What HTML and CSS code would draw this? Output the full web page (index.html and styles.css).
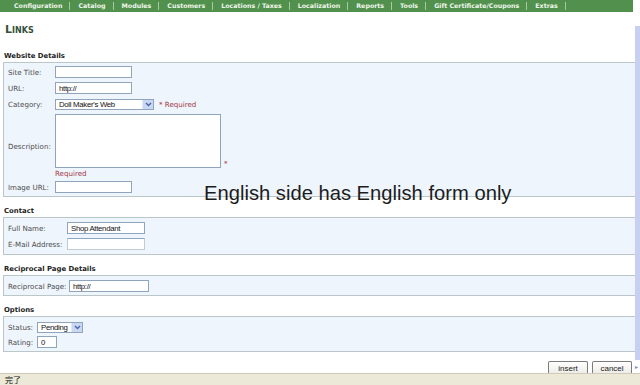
FILE: index.html
```html
<!DOCTYPE html>
<html>
<head>
<meta charset="utf-8">
<link rel="stylesheet" href="styles.css">
</head>
<body>
<div class="screen">
  <div class="viewport">
    <div class="page">
      <nav class="topnav">
        <span class="nav-item">Configuration</span>
        <span class="nav-item">Catalog</span>
        <span class="nav-item">Modules</span>
        <span class="nav-item">Customers</span>
        <span class="nav-item">Locations / Taxes</span>
        <span class="nav-item">Localization</span>
        <span class="nav-item">Reports</span>
        <span class="nav-item">Tools</span>
        <span class="nav-item">Gift Certificate/Coupons</span>
        <span class="nav-item">Extras</span>
      </nav>
      <h1 class="title">Links</h1>

      <h2 class="sec-title first">Website Details</h2>
      <div class="box box-website">
        <div class="row">
          <span class="label w47">Site Title:</span>
          <input class="field w77" type="text" value="">
        </div>
        <div class="row">
          <span class="label w47">URL:</span>
          <input class="field w77" type="text" value="http://">
        </div>
        <div class="row">
          <span class="label w47">Category:</span>
          <span class="select w99"><span class="sel-text">Doll Maker's Web</span><span class="sel-btn"><svg width="7" height="5" viewBox="0 0 7 5"><path d="M1 1 L3.5 3.5 L6 1" fill="none" stroke="#4a64a8" stroke-width="1.4"/></svg></span></span>
          <span class="req req-inline">* Required</span>
        </div>
        <div class="row row-desc">
          <span class="label w47">Description:</span>
          <div class="desc-col">
            <div class="desc-line">
              <textarea class="area"></textarea>
              <span class="req star">*</span>
            </div>
            <span class="req req-under">Required</span>
          </div>
        </div>
        <div class="row last">
          <span class="label w47">Image URL:</span>
          <input class="field w77" type="text" value="">
        </div>
      </div>

      <h2 class="sec-title">Contact</h2>
      <div class="box box-contact">
        <div class="row">
          <span class="label w59">Full Name:</span>
          <input class="field w78" type="text" value="Shop Attendant">
        </div>
        <div class="row last">
          <span class="label w59">E-Mail Address:</span>
          <input class="field w78 faint" type="text" value="">
        </div>
      </div>

      <h2 class="sec-title">Reciprocal Page Details</h2>
      <div class="box box-recip">
        <div class="row last">
          <span class="label w61">Reciprocal Page:</span>
          <input class="field w80" type="text" value="http://">
        </div>
      </div>

      <h2 class="sec-title">Options</h2>
      <div class="box box-options">
        <div class="row tight">
          <span class="label w29">Status:</span>
          <span class="select w46"><span class="sel-text">Pending</span><span class="sel-btn"><svg width="7" height="5" viewBox="0 0 7 5"><path d="M1 1 L3.5 3.5 L6 1" fill="none" stroke="#4a64a8" stroke-width="1.4"/></svg></span></span>
        </div>
        <div class="row last">
          <span class="label w29">Rating:</span>
          <input class="field w20" type="text" value="0">
        </div>
      </div>

      <div class="actions">
        <button class="btn">insert</button>
        <button class="btn">cancel</button>
      </div>
    </div>
    <div class="scrollbar">
      <span class="scroll-arrow">&#9656;</span>
    </div>
  </div>
  <div class="statusbar">完了</div>
  <div class="overlay">English side has English form only</div>
</div>
</body>
</html>
```

FILE: styles.css
```css
html, body {
  margin: 0;
  padding: 0;
  background: #ffffff;
}

.screen {
  position: relative;
  width: 640px;
  height: 385px;
  overflow: hidden;
  display: flex;
  flex-direction: column;
  font-family: "DejaVu Sans", Verdana, sans-serif;
}

.viewport {
  height: 373px;
  display: flex;
  flex-direction: row;
  overflow: hidden;
}

.page {
  width: 635px;
  flex: none;
}

.scrollbar {
  position: relative;
  width: 5px;
  margin-top: 26px;
  height: 334px;
  background: #c8d0f1;
}

.scroll-arrow {
  position: absolute;
  left: 0;
  top: 338px;
  font-size: 6px;
  line-height: 6px;
  color: #7d8ac0;
}

.topnav {
  height: 12px;
  width: 633px;
  background: #52904e;
  display: flex;
  align-items: center;
  padding-left: 6px;
  box-sizing: border-box;
}

.nav-item {
  font-family: "DejaVu Sans", Verdana, sans-serif;
  font-weight: bold;
  font-size: 6.3px;
  line-height: 8px;
  color: #eef6ea;
  padding: 0 7px 0 8px;
  border-right: 1px solid #a9cba4;
  white-space: nowrap;
}

.title {
  margin: 11px 0 0 5px;
  height: 13px;
  font-family: "DejaVu Sans", Verdana, sans-serif;
  font-size: 11px;
  line-height: 13px;
  font-weight: bold;
  font-variant: small-caps;
  color: #34503a;
}

.sec-title {
  margin: 9px 0 0 4px;
  height: 11px;
  font-family: "DejaVu Sans", Tahoma, sans-serif;
  font-size: 6.9px;
  line-height: 11px;
  font-weight: bold;
  color: #222222;
}

.sec-title.first {
  margin-top: 15px;
}

.box {
  margin-left: 3px;
  width: 628px;
  border: 1px solid #bac6c7;
  background: #eff5fc;
  padding: 3px 4px 3px 4px;
}

.box-contact {
  padding-top: 4px;
  padding-bottom: 4px;
}

.box-recip {
  padding-top: 4px;
  padding-bottom: 3px;
}

.box-options {
  padding-top: 4px;
  padding-bottom: 3px;
}

.row {
  display: flex;
  align-items: center;
  margin-bottom: 4px;
  height: 12px;
}

.row.tight {
  margin-bottom: 3px;
}

.row.last {
  margin-bottom: 0;
}

.label {
  font-family: "DejaVu Sans", Verdana, sans-serif;
  font-size: 7.1px;
  color: #4c4c4c;
  white-space: nowrap;
  flex: none;
}

.w47 { width: 47px; }
.w59 { width: 59px; }
.w61 { width: 61px; }
.w29 { width: 29px; }

.field {
  box-sizing: border-box;
  height: 12px;
  margin: 0;
  padding: 0 3px;
  border: 1px solid #8ea5bd;
  background: #ffffff;
  font-family: "Liberation Sans", Arial, sans-serif;
  font-size: 7.8px;
  letter-spacing: -0.3px;
  color: #111111;
  outline: none;
}

.field.faint {
  border-color: #c2ccd6;
  border-top-color: #8ea5bd;
}

.w77 { width: 77px; }
.w78 { width: 78px; }
.w80 { width: 80px; }
.w20 { width: 20px; }

.select {
  box-sizing: border-box;
  height: 11px;
  display: flex;
  align-items: center;
  border: 1px solid #8ea5bd;
  background: #ffffff;
  flex: none;
}

.w99 { width: 99px; }
.w46 { width: 46px; }

.sel-text {
  flex: 1;
  padding-left: 3px;
  font-family: "Liberation Sans", Arial, sans-serif;
  font-size: 7.8px;
  letter-spacing: -0.3px;
  color: #111111;
  line-height: 9px;
  white-space: nowrap;
}

.sel-btn {
  width: 10px;
  height: 9px;
  background: #c9d7f3;
  border-left: 1px solid #e3eafb;
  display: flex;
  align-items: center;
  justify-content: center;
}

.req {
  font-family: "DejaVu Sans", Verdana, sans-serif;
  font-size: 7.1px;
  color: #a23a46;
  white-space: nowrap;
}

.req-inline {
  margin-left: 5px;
}

.row-desc {
  height: auto;
  align-items: center;
  margin-bottom: 3px;
}

.desc-col {
  display: flex;
  flex-direction: column;
}

.desc-line {
  display: flex;
  align-items: flex-end;
}

.area {
  box-sizing: border-box;
  width: 166px;
  height: 54px;
  margin: 0;
  padding: 0;
  border: 1px solid #8ea5bd;
  background: #ffffff;
  resize: none;
  outline: none;
}

.star {
  margin-left: 3px;
  line-height: 8px;
}

.req-under {
  margin-top: 1px;
  line-height: 9px;
}

.actions {
  display: flex;
  justify-content: flex-end;
  gap: 4px;
  margin-top: 9px;
  width: 632px;
}

.btn {
  box-sizing: border-box;
  width: 40px;
  height: 13px;
  margin: 0;
  padding: 0;
  border: 1px solid #7b7b7b;
  border-bottom: none;
  border-radius: 2px 2px 0 0;
  background: linear-gradient(#ffffff, #ecebe6);
  font-family: "Liberation Sans", Arial, sans-serif;
  font-size: 8px;
  line-height: 11px;
  color: #222222;
}

.statusbar {
  box-sizing: border-box;
  height: 12px;
  background: #ece9d8;
  border-top: 1px solid #cfcbb7;
  padding-left: 5px;
  font-family: "Noto Sans CJK JP", "Noto Sans CJK SC", sans-serif;
  font-size: 8px;
  line-height: 11px;
  color: #111111;
}

.overlay {
  position: absolute;
  left: 204px;
  top: 181px;
  font-family: "Liberation Sans", Arial, sans-serif;
  font-size: 20.2px;
  line-height: 24px;
  color: #1c1c1c;
  white-space: nowrap;
}
```
